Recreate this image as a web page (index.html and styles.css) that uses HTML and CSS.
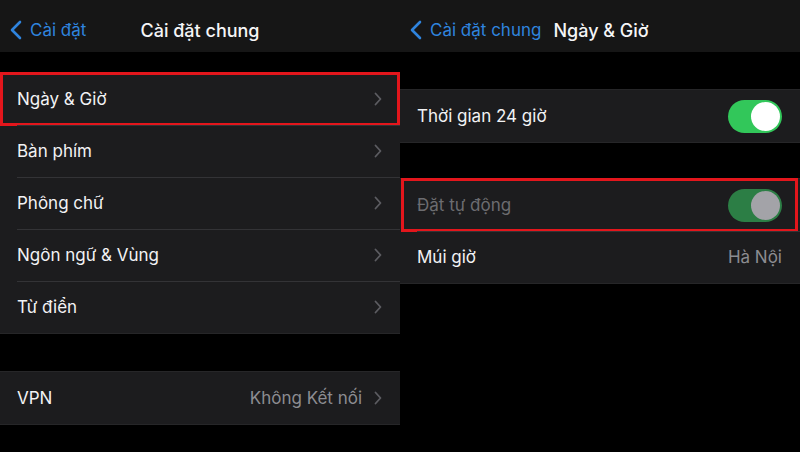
FILE: index.html
```html
<!DOCTYPE html>
<html lang="vi">
<head>
    <meta charset="UTF-8">
    <meta name="viewport" content="width=device-width, initial-scale=1.0">
    <title>Cài đặt chung - Ngày &amp; Giờ</title>
    <link rel="stylesheet" href="styles.css">
</head>
<body>
    <div class="screens">
        <!-- Cài đặt chung -->
        <section class="screen">
            <header class="navbar">
                <a class="back">
                    <svg class="back-icon" viewBox="0 0 12 20" width="12" height="20"><path d="M10 2 L2 10 L10 18" fill="none" stroke="currentColor" stroke-width="2.6" stroke-linecap="round" stroke-linejoin="round"/></svg>
                    <span>Cài đặt</span>
                </a>
                <h1 class="title title-center">Cài đặt chung</h1>
            </header>

            <div class="gap gap-left-1"></div>
            <ul class="group">
                <li class="row highlight highlight-left">
                    <span class="label">Ngày &amp; Giờ</span>
                    <svg class="chevron" viewBox="0 0 8 14" width="8" height="14"><path d="M1.5 1.5 L6.5 7 L1.5 12.5" fill="none" stroke="currentColor" stroke-width="1.8" stroke-linecap="round" stroke-linejoin="round"/></svg>
                </li>
                <li class="row">
                    <span class="label">Bàn phím</span>
                    <svg class="chevron" viewBox="0 0 8 14" width="8" height="14"><path d="M1.5 1.5 L6.5 7 L1.5 12.5" fill="none" stroke="currentColor" stroke-width="1.8" stroke-linecap="round" stroke-linejoin="round"/></svg>
                </li>
                <li class="row">
                    <span class="label">Phông chữ</span>
                    <svg class="chevron" viewBox="0 0 8 14" width="8" height="14"><path d="M1.5 1.5 L6.5 7 L1.5 12.5" fill="none" stroke="currentColor" stroke-width="1.8" stroke-linecap="round" stroke-linejoin="round"/></svg>
                </li>
                <li class="row">
                    <span class="label">Ngôn ngữ &amp; Vùng</span>
                    <svg class="chevron" viewBox="0 0 8 14" width="8" height="14"><path d="M1.5 1.5 L6.5 7 L1.5 12.5" fill="none" stroke="currentColor" stroke-width="1.8" stroke-linecap="round" stroke-linejoin="round"/></svg>
                </li>
                <li class="row">
                    <span class="label">Từ điển</span>
                    <svg class="chevron" viewBox="0 0 8 14" width="8" height="14"><path d="M1.5 1.5 L6.5 7 L1.5 12.5" fill="none" stroke="currentColor" stroke-width="1.8" stroke-linecap="round" stroke-linejoin="round"/></svg>
                </li>
            </ul>

            <div class="gap gap-left-2"></div>
            <ul class="group">
                <li class="row">
                    <span class="label">VPN</span>
                    <span class="value">Không Kết nối</span>
                    <svg class="chevron" viewBox="0 0 8 14" width="8" height="14"><path d="M1.5 1.5 L6.5 7 L1.5 12.5" fill="none" stroke="currentColor" stroke-width="1.8" stroke-linecap="round" stroke-linejoin="round"/></svg>
                </li>
            </ul>
        </section>

        <!-- Ngày & Giờ -->
        <section class="screen">
            <header class="navbar">
                <a class="back">
                    <svg class="back-icon" viewBox="0 0 12 20" width="12" height="20"><path d="M10 2 L2 10 L10 18" fill="none" stroke="currentColor" stroke-width="2.6" stroke-linecap="round" stroke-linejoin="round"/></svg>
                    <span>Cài đặt chung</span>
                </a>
                <h1 class="title">Ngày &amp; Giờ</h1>
            </header>

            <div class="gap gap-right-1"></div>
            <ul class="group">
                <li class="row">
                    <span class="label">Thời gian 24 giờ</span>
                    <span class="switch on"><span class="knob"></span></span>
                </li>
            </ul>

            <div class="gap gap-right-2"></div>
            <ul class="group">
                <li class="row highlight highlight-right">
                    <span class="label dimmed">Đặt tự động</span>
                    <span class="switch on disabled"><span class="knob"></span></span>
                </li>
                <li class="row">
                    <span class="label">Múi giờ</span>
                    <span class="value">Hà Nội</span>
                </li>
            </ul>
        </section>
    </div>
</body>
</html>
```

FILE: styles.css
```css
/* iOS dark settings, two screens side by side */
body {
    margin: 0;
    background: #000;
    font-family: Inter, "Noto Sans", sans-serif;
    color: #f2f2f4;
}

.screens {
    display: flex;
    width: 800px;
    height: 452px;
    overflow: hidden;
}

.screen {
    width: 400px;
    flex: none;
}

.navbar {
    position: relative;
    height: 52px;
    background: #161616;
    display: flex;
    align-items: center;
    padding: 8px 0 0 10px;
    box-sizing: border-box;
}

.back {
    display: flex;
    align-items: center;
    gap: 8px;
    color: #2f84de;
    font-size: 17px;
}

.back-icon {
    display: block;
}

.title {
    margin: 0 0 0 12px;
    font-size: 18px;
    font-weight: 500;
    color: #f5f5f7;
}

.title-center {
    position: absolute;
    left: 0;
    right: 0;
    top: 8px;
    bottom: 0;
    margin: 0;
    display: flex;
    align-items: center;
    justify-content: center;
}

.gap-left-1 { height: 20px; }
.gap-left-2 { height: 37px; }
.gap-right-1 { height: 37px; }
.gap-right-2 { height: 35px; }

.group {
    list-style: none;
    margin: 0;
    padding: 0;
    background: #1c1c1e;
    border-top: 1px solid #262628;
    border-bottom: 1px solid #262628;
}

.row {
    position: relative;
    height: 52px;
    display: flex;
    align-items: center;
    padding: 0 18px 0 17px;
    font-size: 17px;
}

.row + .row::before {
    content: "";
    position: absolute;
    left: 17px;
    right: 0;
    top: 0;
    height: 1px;
    background: #333336;
}

.label {
    flex: 1;
}

.label.dimmed {
    color: #6c6c70;
}

.value {
    color: #8c8c91;
}

.chevron {
    color: #5c5c61;
    margin-left: 12px;
    flex: none;
}

.switch {
    width: 54px;
    height: 33px;
    border-radius: 17px;
    background: #32c75a;
    position: relative;
    flex: none;
}

.switch .knob {
    position: absolute;
    top: 2px;
    right: 2px;
    width: 29px;
    height: 29px;
    border-radius: 50%;
    background: #fff;
}

.switch.disabled {
    background: #2c7e45;
}

.switch.disabled .knob {
    background: #a3a3a8;
}

/* red annotation boxes */
.highlight::after {
    content: "";
    position: absolute;
    border: 3px solid #e3161c;
    pointer-events: none;
}

.highlight-left::after {
    left: 0;
    right: 0;
    top: -1px;
    bottom: -1px;
}

.highlight-right::after {
    left: 1px;
    right: 2px;
    top: -1px;
    bottom: -1px;
}
```
